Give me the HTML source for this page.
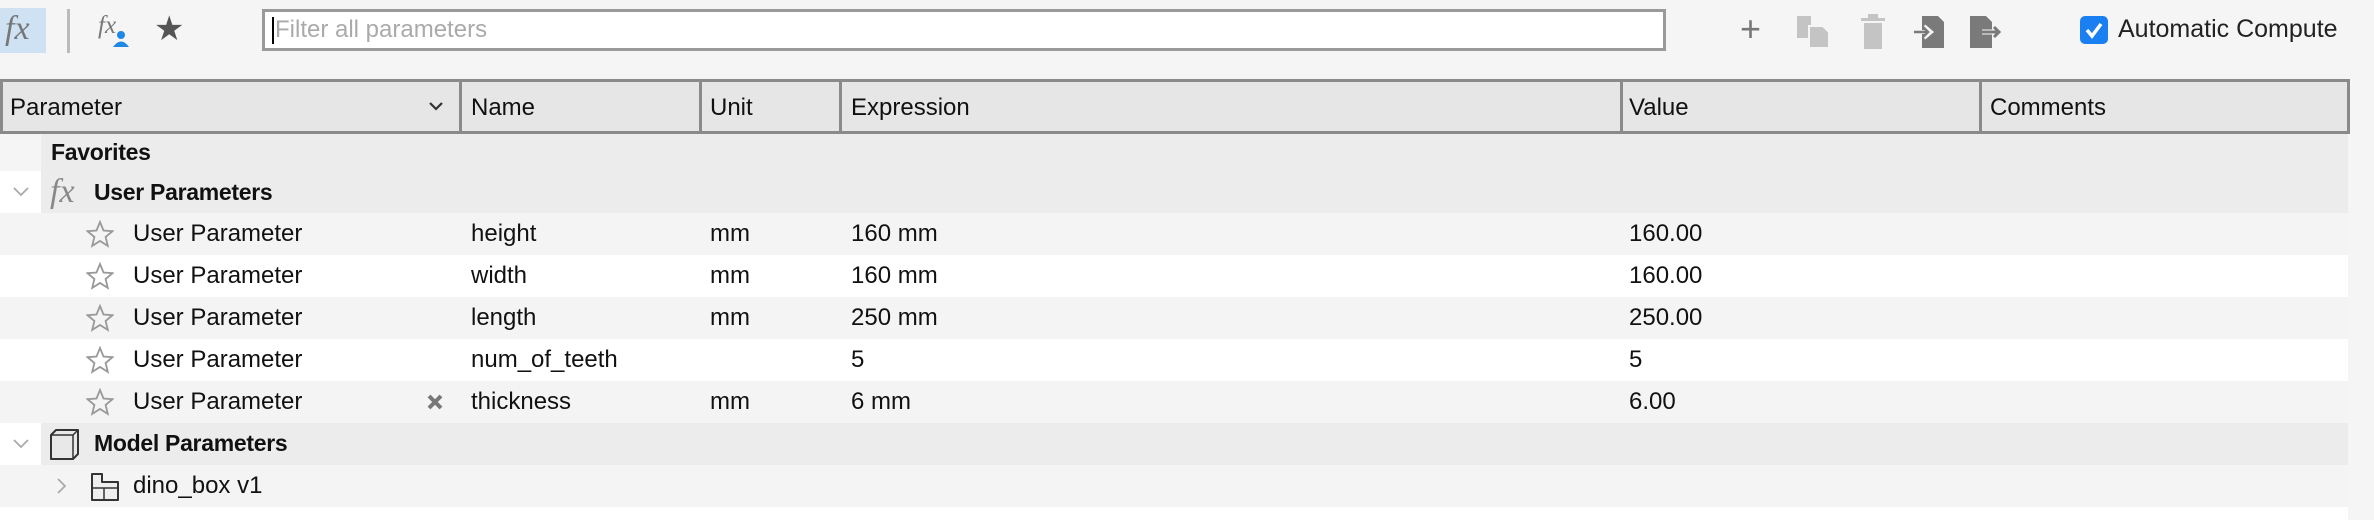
<!DOCTYPE html>
<html><head><meta charset="utf-8"><style>
*{margin:0;padding:0;box-sizing:border-box}
body{width:2374px;height:520px;background:#f5f5f5;font-family:"Liberation Sans",sans-serif;font-size:24px;color:#111;position:relative;overflow:hidden}
.a{position:absolute}
.t{position:absolute;line-height:1;white-space:nowrap}
.row{position:absolute;left:0;width:2348px;height:42px}
.hd{position:absolute;top:79px;height:55px;border:3px solid #8a8a8a;background:#e6e6e6}
.ht{position:absolute;top:96px;line-height:1}
.star{position:absolute;left:86px;width:28px;height:28px}
.g{font-weight:bold;font-size:23px;letter-spacing:-0.3px}
</style></head><body>
<div class="a" style="left:0;top:8px;width:46px;height:45px;background:#cfe2f3"></div>
<div class="t" style="left:5px;top:12px;font-family:'Liberation Serif',serif;font-style:italic;font-size:34px;color:#777">fx</div>
<div class="a" style="left:67px;top:9px;width:3px;height:44px;background:#bbb"></div>
<div class="t" style="left:98px;top:13px;font-family:'Liberation Serif',serif;font-style:italic;font-size:25px;color:#777">fx</div>
<svg class="a" style="left:112px;top:30px" width="18" height="18"><circle cx="9" cy="5" r="4" fill="#1e88e5"/><path d="M1 17 Q9 6 17 17Z" fill="#1e88e5"/></svg>
<div class="t" style="left:154px;top:12px;font-size:34px;color:#555">★</div>
<div class="a" style="left:262px;top:9px;width:1404px;height:42px;background:#fff;border:3px solid #9a9a9a"></div>
<div class="a" style="left:272px;top:17px;width:2px;height:27px;background:#000"></div>
<div class="t" style="left:275px;top:18px;color:#aaa;font-size:24px">Filter all parameters</div>
<div class="t" style="left:1740px;top:11px;font-size:36px;color:#777">+</div>
<svg class="a" style="left:1795px;top:14px" width="36" height="36"><rect x="2" y="2" width="14" height="22" fill="#c4c4c4"/><path d="M14 12h14l6 6v16H14z" fill="#c4c4c4" stroke="#f5f5f5" stroke-width="2"/></svg>
<svg class="a" style="left:1858px;top:14px" width="30" height="36"><rect x="3" y="4" width="24" height="3" fill="#c4c4c4"/><rect x="10" y="0" width="10" height="4" fill="#c4c4c4"/><rect x="6" y="9" width="18" height="26" fill="#c4c4c4"/></svg>
<svg class="a" style="left:1912px;top:14px" width="36" height="36"><path d="M10 2h16l6 6v26H10z" fill="#7a7a7a"/><path d="M2 18h14M12 12l7 6-7 6" stroke="#f5f5f5" stroke-width="4" fill="none"/><path d="M2 18h13M11 13l5 5-5 5" stroke="#7a7a7a" stroke-width="2.5" fill="none"/></svg>
<svg class="a" style="left:1968px;top:14px" width="36" height="36"><path d="M2 2h16l6 6v26H2z" fill="#7a7a7a"/><path d="M14 18h18M26 12l7 6-7 6" stroke="#f5f5f5" stroke-width="5" fill="none"/><path d="M14 18h17M26 13l5 5-5 5" stroke="#7a7a7a" stroke-width="3" fill="none"/></svg>
<div class="a" style="left:2080px;top:16px;width:28px;height:28px;background:#1a7ff0;border-radius:5px"></div>
<svg class="a" style="left:2080px;top:16px" width="28" height="28"><path d="M7 14l5 6 9-12" stroke="#fff" stroke-width="3.5" fill="none"/></svg>
<div class="t" style="left:2118px;top:17px;font-size:25px;color:#222">Automatic Compute</div>
<div class="hd" style="left:0;width:462px"></div>
<div class="hd" style="left:459px;width:243px"></div>
<div class="hd" style="left:699px;width:143px"></div>
<div class="hd" style="left:839px;width:784px"></div>
<div class="hd" style="left:1620px;width:362px"></div>
<div class="hd" style="left:1979px;width:371px"></div>
<div class="ht" style="left:10px">Parameter</div>
<svg class="a" style="left:428px;top:100px" width="16" height="12"><path d="M2 3l6 6 6-6" stroke="#333" stroke-width="2.2" fill="none"/></svg>
<div class="ht" style="left:471px">Name</div>
<div class="ht" style="left:710px">Unit</div>
<div class="ht" style="left:851px">Expression</div>
<div class="ht" style="left:1629px">Value</div>
<div class="ht" style="left:1990px">Comments</div>
<div class="row" style="top:134px;left:41px;width:2307px;background:#ececec"></div>
<div class="row" style="top:171px;left:41px;width:2307px;background:#ececec"></div>
<div class="row" style="top:171px;left:0;width:41px;background:#fff"></div>
<div class="row" style="top:213px;background:#f4f4f4"></div>
<div class="row" style="top:255px;background:#fff"></div>
<div class="row" style="top:297px;background:#f4f4f4"></div>
<div class="row" style="top:339px;background:#fff"></div>
<div class="row" style="top:381px;background:#f4f4f4"></div>
<div class="row" style="top:423px;left:41px;width:2307px;background:#ececec"></div>
<div class="row" style="top:423px;left:0;width:41px;background:#fff"></div>
<div class="row" style="top:465px;background:#f4f4f4"></div>
<div class="row" style="top:507px;background:#fff;height:13px"></div>

<div class="t g" style="left:51px;top:141px">Favorites</div>
<svg class="a" style="left:12px;top:186px" width="18" height="12"><path d="M2 2l7 7 7-7" stroke="#aaa" stroke-width="1.8" fill="none"/></svg>
<div class="t" style="left:50px;top:175px;font-family:'Liberation Serif',serif;font-style:italic;font-size:34px;color:#888">fx</div>
<div class="t g" style="left:94px;top:181px">User Parameters</div>

<svg class="star" style="top:220px" viewBox="0 0 28 28"><path d="M14 2l3.5 8.5 9 .7-6.9 5.8 2.2 8.9L14 21l-7.8 4.9 2.2-8.9L1.5 11.2l9-.7z" fill="none" stroke="#999" stroke-width="1.8"/></svg>
<svg class="star" style="top:262px" viewBox="0 0 28 28"><path d="M14 2l3.5 8.5 9 .7-6.9 5.8 2.2 8.9L14 21l-7.8 4.9 2.2-8.9L1.5 11.2l9-.7z" fill="none" stroke="#999" stroke-width="1.8"/></svg>
<svg class="star" style="top:304px" viewBox="0 0 28 28"><path d="M14 2l3.5 8.5 9 .7-6.9 5.8 2.2 8.9L14 21l-7.8 4.9 2.2-8.9L1.5 11.2l9-.7z" fill="none" stroke="#999" stroke-width="1.8"/></svg>
<svg class="star" style="top:346px" viewBox="0 0 28 28"><path d="M14 2l3.5 8.5 9 .7-6.9 5.8 2.2 8.9L14 21l-7.8 4.9 2.2-8.9L1.5 11.2l9-.7z" fill="none" stroke="#999" stroke-width="1.8"/></svg>
<svg class="star" style="top:388px" viewBox="0 0 28 28"><path d="M14 2l3.5 8.5 9 .7-6.9 5.8 2.2 8.9L14 21l-7.8 4.9 2.2-8.9L1.5 11.2l9-.7z" fill="none" stroke="#999" stroke-width="1.8"/></svg>

<div class="t" style="left:133px;top:222px">User Parameter</div>
<div class="t" style="left:471px;top:222px">height</div>
<div class="t" style="left:710px;top:222px">mm</div>
<div class="t" style="left:851px;top:222px">160 mm</div>
<div class="t" style="left:1629px;top:222px">160.00</div>

<div class="t" style="left:133px;top:264px">User Parameter</div>
<div class="t" style="left:471px;top:264px">width</div>
<div class="t" style="left:710px;top:264px">mm</div>
<div class="t" style="left:851px;top:264px">160 mm</div>
<div class="t" style="left:1629px;top:264px">160.00</div>

<div class="t" style="left:133px;top:306px">User Parameter</div>
<div class="t" style="left:471px;top:306px">length</div>
<div class="t" style="left:710px;top:306px">mm</div>
<div class="t" style="left:851px;top:306px">250 mm</div>
<div class="t" style="left:1629px;top:306px">250.00</div>

<div class="t" style="left:133px;top:348px">User Parameter</div>
<div class="t" style="left:471px;top:348px">num_of_teeth</div>
<div class="t" style="left:851px;top:348px">5</div>
<div class="t" style="left:1629px;top:348px">5</div>

<div class="t" style="left:133px;top:390px">User Parameter</div>
<svg class="a" style="left:426px;top:393px" width="18" height="18"><path d="M3 3l12 12M15 3L3 15" stroke="#777" stroke-width="4"/></svg>
<div class="t" style="left:471px;top:390px">thickness</div>
<div class="t" style="left:710px;top:390px">mm</div>
<div class="t" style="left:851px;top:390px">6 mm</div>
<div class="t" style="left:1629px;top:390px">6.00</div>

<svg class="a" style="left:12px;top:438px" width="18" height="12"><path d="M2 2l7 7 7-7" stroke="#aaa" stroke-width="1.8" fill="none"/></svg>
<svg class="a" style="left:49px;top:428px" width="32" height="32"><path d="M7 2h22v24l-5 5H2V7z" fill="#e8e8e8" stroke="#333" stroke-width="2" stroke-linejoin="round"/><path d="M2 7h22v24M24 7l5-5" stroke="#333" stroke-width="1.5" fill="none"/></svg>
<div class="t g" style="left:94px;top:432px">Model Parameters</div>
<svg class="a" style="left:56px;top:477px" width="12" height="18"><path d="M2 2l7 7-7 7" stroke="#aaa" stroke-width="1.8" fill="none"/></svg>
<svg class="a" style="left:90px;top:470px" width="30" height="32"><path d="M2 4h10v8h16v18H2z" fill="#eee" stroke="#333" stroke-width="2" stroke-linejoin="round"/><path d="M2 18h26M14 18v12" stroke="#333" stroke-width="1.5" fill="none"/></svg>
<div class="t" style="left:133px;top:474px">dino_box v1</div>
</body></html>
